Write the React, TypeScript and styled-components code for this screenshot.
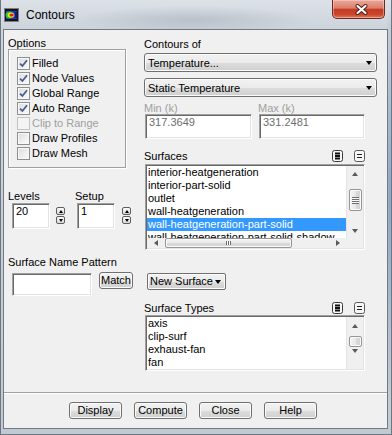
import React from 'react'
import styled, { createGlobalStyle, css } from 'styled-components'

const GlobalStyle = createGlobalStyle`
  html, body {
    margin: 0;
    padding: 0;
  }
  body {
    font-family: "Liberation Sans", Arial, sans-serif;
    font-size: 11px;
    color: #000;
    background: #c3cad2;
  }
  * {
    box-sizing: border-box;
  }
`

const options = [
  { label: 'Filled', checked: true },
  { label: 'Node Values', checked: true },
  { label: 'Global Range', checked: true },
  { label: 'Auto Range', checked: true },
  { label: 'Clip to Range', checked: false, disabled: true },
  { label: 'Draw Profiles', checked: false },
  { label: 'Draw Mesh', checked: false },
]

const surfaces = [
  'interior-heatgeneration',
  'interior-part-solid',
  'outlet',
  'wall-heatgeneration',
  'wall-heatgeneration-part-solid',
  'wall-heatgeneration-part-solid-shadow',
]

const surfaceTypes = ['axis', 'clip-surf', 'exhaust-fan', 'fan']

type Dir = 'up' | 'down' | 'left' | 'right'

const Triangle = styled.span<{ $dir: Dir; $w?: number; $h?: number; $color?: string }>`
  display: block;
  width: 0;
  height: 0;
  border-style: solid;
  ${({ $dir, $w = 7, $h = 4, $color = '#000' }) => {
    switch ($dir) {
      case 'up':
        return css`
          border-width: 0 ${$w / 2}px ${$h}px ${$w / 2}px;
          border-color: transparent transparent ${$color} transparent;
        `
      case 'down':
        return css`
          border-width: ${$h}px ${$w / 2}px 0 ${$w / 2}px;
          border-color: ${$color} transparent transparent transparent;
        `
      case 'left':
        return css`
          border-width: ${$w / 2}px ${$h}px ${$w / 2}px 0;
          border-color: transparent ${$color} transparent transparent;
        `
      default:
        return css`
          border-width: ${$w / 2}px 0 ${$w / 2}px ${$h}px;
          border-color: transparent transparent transparent ${$color};
        `
    }
  }}
`

const Window = styled.div`
  width: 392px;
  height: 435px;
  display: flex;
  flex-direction: column;
  border: 1px solid #6c7782;
  border-top: none;
  background:
    radial-gradient(ellipse 120px 14px at 190px 20px, rgba(140, 150, 165, 0.35), transparent),
    radial-gradient(ellipse 8px 200px at 389px 200px, rgba(90, 130, 180, 0.55), transparent),
    linear-gradient(180deg, #dde2e8 0px, #ccd3da 29px, #c2c9d1 100%);
`

const TitleBar = styled.div`
  height: 29px;
  display: flex;
  align-items: flex-start;
  padding-left: 2px;
  flex: none;
`

const Title = styled.div`
  margin: 8px 0 0 7px;
  line-height: 14px;
  font-size: 12px;
  color: #000;
`

const CloseButton = styled.div`
  margin-left: auto;
  margin-right: 6px;
  width: 53px;
  height: 19px;
  border: 1px solid #6e2a20;
  border-top: none;
  border-radius: 0 0 5px 5px;
  background: linear-gradient(180deg, #e9a99c 0%, #dc7e6c 45%, #c63b22 52%, #c9452c 80%, #dd7a5e 100%);
  box-shadow: inset 0 0 0 1px rgba(255, 220, 210, 0.45);
  display: flex;
  align-items: center;
  justify-content: center;
  padding-left: 6px;
`

const Client = styled.div`
  flex: 1;
  margin: 0 3px 5px 2px;
  background: #f0f0f0;
  border: 1px solid #6f7a86;
  display: flex;
  flex-direction: column;
`

const Body = styled.div`
  flex: 1;
  display: flex;
  align-items: flex-start;
  padding: 7px 0 0 4px;
`

const LeftColumn = styled.div`
  width: 128px;
  display: flex;
  flex-direction: column;
  align-items: flex-start;
`

const RightColumn = styled.div`
  width: 233px;
  margin-left: 8px;
  display: flex;
  flex-direction: column;
  align-items: flex-start;
`

const Caption = styled.div<{ $muted?: boolean; $top?: number; $lh?: number }>`
  line-height: ${p => p.$lh ?? 12}px;
  margin-top: ${p => p.$top ?? 0}px;
  color: ${p => (p.$muted ? '#a0a0a0' : '#000')};
  white-space: nowrap;
`

const GroupBox = styled.div`
  width: 118px;
  height: 119px;
  border: 1px solid #a0a0a0;
  box-shadow: inset 1px 1px 0 #fff, 1px 1px 0 #fff;
  padding: 6px 0 0 8px;
`

const CheckRow = styled.div`
  height: 15px;
  display: flex;
  align-items: center;
`

const CheckBox = styled.span<{ $disabled?: boolean }>`
  width: 13px;
  height: 13px;
  border: 1px solid ${p => (p.$disabled ? '#c4c4c4' : '#8e8f8f')};
  background: ${p =>
    p.$disabled
      ? '#f4f4f4'
      : 'linear-gradient(135deg, #dcdcdc 0%, #f0f0f0 60%, #fbfbfb 100%)'};
  box-shadow: inset 0 0 0 1px ${p => (p.$disabled ? '#f4f4f4' : '#f8f8f8')};
  display: flex;
  align-items: center;
  justify-content: center;
`

const CheckLabel = styled.span<{ $disabled?: boolean }>`
  margin-left: 2px;
  line-height: 13px;
  color: ${p => (p.$disabled ? '#a0a0a0' : '#000')};
`

const SpinRow = styled.div`
  margin-top: 22px;
  display: flex;
  gap: 10px;
`

const SpinField = styled.div`
  display: flex;
  flex-direction: column;
`

const EntryLine = styled.div<{ $indent: number; $gap: number }>`
  display: flex;
  align-items: flex-start;
  margin-left: ${p => p.$indent}px;
  gap: ${p => p.$gap}px;
`

const Entry = styled.div<{ $w: number; $h: number; $muted?: boolean; $left?: number }>`
  width: ${p => p.$w}px;
  height: ${p => p.$h}px;
  margin-left: ${p => p.$left ?? 0}px;
  flex: none;
  background: #fff;
  border: 1px solid;
  border-color: #a0a0a0 #fff #fff #a0a0a0;
  box-shadow: inset 1px 1px 0 #696969, inset -1px -1px 0 #e3e3e3;
  padding: 1px 3px;
  line-height: 12px;
  color: ${p => (p.$muted ? '#6d6d6d' : '#000')};
  white-space: nowrap;
`

const SpinButtons = styled.div`
  margin-top: 4px;
  display: flex;
  flex-direction: column;
  gap: 1px;
`

const SpinButton = styled.div`
  width: 9px;
  height: 8px;
  border: 1px solid #5e5e5e;
  border-radius: 2px;
  background: linear-gradient(#fafafa, #dadada);
  display: flex;
  align-items: center;
  justify-content: center;
`

const PatternRow = styled.div`
  margin-top: 4px;
  display: flex;
  align-items: flex-start;
  gap: 7px;
  margin-left: 4px;
`

const PushButton = styled.div<{ $w: number; $shift?: number }>`
  width: ${p => p.$w}px;
  height: 17px;
  margin-top: ${p => p.$shift ?? 0}px;
  border: 1px solid #707070;
  border-radius: 3px;
  background: linear-gradient(#f2f2f2 0%, #ebebeb 50%, #dddddd 51%, #cfcfcf 100%);
  box-shadow: inset 0 0 0 1px #fbfbfb;
  line-height: 15px;
  text-align: center;
  white-space: nowrap;
  flex: none;
`

const MenuButton = styled(PushButton)`
  display: flex;
  align-items: center;
  gap: 2px;
  padding-left: 2px;
  margin-left: 3px;
  margin-top: 23px;
  border-radius: 2px;
`

const Combo = styled.div<{ $top: number }>`
  width: 233px;
  height: 19px;
  margin-top: ${p => p.$top}px;
  border: 1px solid #707070;
  border-radius: 3px;
  background: linear-gradient(#f2f2f2 0%, #ebebeb 50%, #dddddd 51%, #cfcfcf 100%);
  box-shadow: inset 0 0 0 1px #fbfbfb;
  display: flex;
  align-items: center;
  justify-content: space-between;
  padding: 0 4px 0 3px;
`

const RangeRow = styled.div`
  margin-top: 6px;
  display: flex;
  gap: 6px;
`

const RangeField = styled.div`
  display: flex;
  flex-direction: column;
`

const ListHeader = styled.div<{ $top: number }>`
  width: 221px;
  height: 13px;
  margin-top: ${p => p.$top}px;
  display: flex;
  align-items: center;
  justify-content: space-between;
`

const HeaderTools = styled.div`
  display: flex;
  gap: 11px;
`

const ListFrame = styled.div<{ $h: number; $top: number; $hscroll?: boolean }>`
  width: 220px;
  height: ${p => p.$h}px;
  margin: ${p => p.$top}px 0 0 1px;
  border: 1px solid;
  border-color: #a0a0a0 #fff #fff #a0a0a0;
  box-shadow: inset 1px 1px 0 #696969, inset -1px -1px 0 #e3e3e3;
  padding: 1px;
  background: #fff;
  display: grid;
  grid-template-columns: 1fr 17px;
  grid-template-rows: ${p => (p.$hscroll ? '1fr 10px' : '1fr')};
`

const ListItems = styled.div`
  grid-column: 1;
  grid-row: 1;
  overflow: hidden;
`

const ListItem = styled.div<{ $selected?: boolean }>`
  height: 13px;
  line-height: 13px;
  padding-left: 1px;
  white-space: nowrap;
  background: ${p => (p.$selected ? '#3399ff' : 'transparent')};
  color: ${p => (p.$selected ? '#fff' : '#000')};
`

const VTrack = styled.div`
  grid-column: 2;
  grid-row: 1;
  background: #f0f0f0;
  border-left: 1px solid #e4e4e4;
  display: flex;
  flex-direction: column;
  align-items: center;
  overflow: hidden;
`

const Cell = styled.div<{ $h: number }>`
  height: ${p => p.$h}px;
  flex: none;
  width: 100%;
  display: flex;
  align-items: center;
  justify-content: center;
`

const VThumb = styled.div<{ $h: number }>`
  width: 13px;
  height: ${p => p.$h}px;
  flex: none;
  border: 1px solid #959595;
  border-radius: 2px;
  background: linear-gradient(90deg, #f4f4f4 0%, #e8e8e8 50%, #d9d9d9 51%, #d4d4d4 100%);
  box-shadow: inset 0 0 0 1px #fafafa;
  display: flex;
  align-items: center;
  justify-content: center;
`

const VGrip = styled.div`
  width: 7px;
  height: 7px;
  background: repeating-linear-gradient(180deg, #6f6f6f 0 1px, #fafafa 1px 2px);
`

const HTrack = styled.div`
  grid-column: 1;
  grid-row: 2;
  background: #f0f0f0;
  display: flex;
  align-items: center;
`

const HThumb = styled.div`
  width: 127px;
  height: 10px;
  margin-left: 1px;
  border: 1px solid #959595;
  border-radius: 2px;
  background: linear-gradient(#f4f4f4 0%, #e8e8e8 50%, #d9d9d9 51%, #d4d4d4 100%);
  box-shadow: inset 0 0 0 1px #fafafa;
  display: flex;
  align-items: center;
  justify-content: center;
`

const HGrip = styled.div`
  width: 5px;
  height: 4px;
  background: repeating-linear-gradient(90deg, #6f6f6f 0 1px, #fafafa 1px 2px);
`

const Filler = styled.div`
  flex: 1;
`

const Corner = styled.div`
  grid-column: 2;
  grid-row: 2;
  background: #f0f0f0;
`

const Separator = styled.div`
  border-top: 1px solid #a0a0a0;
  border-bottom: 1px solid #fff;
`

const ButtonRow = styled.div`
  display: flex;
  justify-content: center;
  gap: 12px;
  padding: 8px 5px 9px 0;
`

const AppIcon = () => (
  <svg width="15" height="14" viewBox="0 0 15 14" style={{ marginTop: 8, marginLeft: 1 }}>
    <rect x="0.5" y="0.5" width="14" height="13" fill="#151515" stroke="#7d7d7d" />
    <rect x="2" y="3" width="11" height="8" fill="#1838c8" />
    <ellipse cx="5.5" cy="7" rx="4" ry="3.6" fill="#19c84a" />
    <ellipse cx="7" cy="7" rx="3.4" ry="2.6" fill="#f0e020" />
    <ellipse cx="7.6" cy="7" rx="2.2" ry="1.6" fill="#e82010" />
    <rect x="11" y="4" width="2" height="6" fill="#0a1890" />
  </svg>
)

const CloseGlyph = () => (
  <svg width="13" height="11" viewBox="0 0 13 11">
    <path d="M2.5 2 L10.5 9 M10.5 2 L2.5 9" stroke="#4a1a14" strokeWidth="4" strokeLinecap="round" />
    <path d="M2.5 2 L10.5 9 M10.5 2 L2.5 9" stroke="#fff" strokeWidth="2.2" strokeLinecap="round" />
  </svg>
)

const CheckMark = () => (
  <svg width="9" height="9" viewBox="0 0 9 9">
    <path d="M1 4.6 L3.4 7 L8 1.2" fill="none" stroke="#4a5d8f" strokeWidth="1.8" />
  </svg>
)

const SelectAllIcon = () => (
  <svg width="11" height="12" viewBox="0 0 11 12">
    <rect x="0.5" y="0.5" width="10" height="11" rx="2" fill="#f6f6f6" stroke="#3a3a3a" />
    <rect x="3" y="2.5" width="5" height="2" fill="#111" />
    <rect x="3" y="5" width="5" height="2" fill="#111" />
    <rect x="3" y="7.5" width="5" height="2" fill="#111" />
  </svg>
)

const DeselectAllIcon = () => (
  <svg width="11" height="12" viewBox="0 0 11 12">
    <rect x="0.5" y="0.5" width="10" height="11" rx="2" fill="#f6f6f6" stroke="#5a5a5a" />
    <path d="M3 4.5 H8 M3 7.5 H8" stroke="#222" strokeWidth="1" />
  </svg>
)

type ScrollLayout = { up: number; gapA: number; thumb: number; gapB: number; down: number; grip?: boolean }

const VScroll = ({ up, gapA, thumb, gapB, down, grip }: ScrollLayout) => (
  <VTrack>
    <Cell $h={up}>
      <Triangle $dir="up" $w={7} $h={4} $color="#5a5a5a" />
    </Cell>
    <Cell $h={gapA} />
    <VThumb $h={thumb}>{grip && <VGrip />}</VThumb>
    <Cell $h={gapB} />
    <Cell $h={down}>
      <Triangle $dir="down" $w={7} $h={4} $color="#5a5a5a" />
    </Cell>
  </VTrack>
)

const Spinner = () => (
  <SpinButtons>
    <SpinButton>
      <Triangle $dir="up" $w={5} $h={3} />
    </SpinButton>
    <SpinButton>
      <Triangle $dir="down" $w={5} $h={3} />
    </SpinButton>
  </SpinButtons>
)

export default function App() {
  return (
    <>
      <GlobalStyle />
      <Window>
        <TitleBar>
          <AppIcon />
          <Title>Contours</Title>
          <CloseButton>
            <CloseGlyph />
          </CloseButton>
        </TitleBar>
        <Client>
          <Body>
            <LeftColumn>
              <Caption>Options</Caption>
              <GroupBox>
                {options.map(o => (
                  <CheckRow key={o.label}>
                    <CheckBox $disabled={o.disabled}>{o.checked && <CheckMark />}</CheckBox>
                    <CheckLabel $disabled={o.disabled}>{o.label}</CheckLabel>
                  </CheckRow>
                ))}
              </GroupBox>

              <SpinRow>
                <SpinField>
                  <Caption $lh={13}>Levels</Caption>
                  <EntryLine $indent={4} $gap={6}>
                    <Entry $w={38} $h={26}>20</Entry>
                    <Spinner />
                  </EntryLine>
                </SpinField>
                <SpinField>
                  <Caption $lh={13}>Setup</Caption>
                  <EntryLine $indent={2} $gap={7}>
                    <Entry $w={38} $h={26}>1</Entry>
                    <Spinner />
                  </EntryLine>
                </SpinField>
              </SpinRow>

              <Caption $top={27} $lh={13}>Surface Name Pattern</Caption>
              <PatternRow>
                <Entry $w={80} $h={23} />
                <PushButton $w={34} $shift={-1}>Match</PushButton>
              </PatternRow>
            </LeftColumn>

            <RightColumn>
              <Caption $top={1}>Contours of</Caption>
              <Combo $top={3}>
                <span>Temperature...</span>
                <Triangle $dir="down" />
              </Combo>
              <Combo $top={6}>
                <span>Static Temperature</span>
                <Triangle $dir="down" />
              </Combo>

              <RangeRow>
                <RangeField>
                  <Caption $muted $lh={11}>Min (k)</Caption>
                  <Entry $w={107} $h={25} $left={1} $muted>317.3649</Entry>
                </RangeField>
                <RangeField>
                  <Caption $muted $lh={11}>Max (k)</Caption>
                  <Entry $w={106} $h={25} $left={1} $muted>331.2481</Entry>
                </RangeField>
              </RangeRow>

              <ListHeader $top={10}>
                <span>Surfaces</span>
                <HeaderTools>
                  <SelectAllIcon />
                  <DeselectAllIcon />
                </HeaderTools>
              </ListHeader>
              <ListFrame $h={86} $top={2} $hscroll>
                <ListItems>
                  {surfaces.map((s, i) => (
                    <ListItem key={s} $selected={i === 4}>{s}</ListItem>
                  ))}
                </ListItems>
                <VScroll up={15} gapA={8} thumb={22} gapB={13} down={14} grip />
                <HTrack>
                  <Cell $h={10} style={{ width: 17 }}>
                    <Triangle $dir="left" $w={7} $h={4} $color="#5a5a5a" />
                  </Cell>
                  <HThumb>
                    <HGrip />
                  </HThumb>
                  <Filler />
                  <Cell $h={10} style={{ width: 17 }}>
                    <Triangle $dir="right" $w={7} $h={4} $color="#5a5a5a" />
                  </Cell>
                </HTrack>
                <Corner />
              </ListFrame>

              <MenuButton $w={79}>
                <span>New Surface</span>
                <Triangle $dir="down" />
              </MenuButton>

              <ListHeader $top={11}>
                <span>Surface Types</span>
                <HeaderTools>
                  <SelectAllIcon />
                  <DeselectAllIcon />
                </HeaderTools>
              </ListHeader>
              <ListFrame $h={56} $top={1}>
                <ListItems>
                  {surfaceTypes.map(s => (
                    <ListItem key={s}>{s}</ListItem>
                  ))}
                </ListItems>
                <VScroll up={18} gapA={1} thumb={11} gapB={0} down={8} />
              </ListFrame>
            </RightColumn>
          </Body>

          <Separator />
          <ButtonRow>
            <PushButton $w={53}>Display</PushButton>
            <PushButton $w={53}>Compute</PushButton>
            <PushButton $w={53}>Close</PushButton>
            <PushButton $w={53}>Help</PushButton>
          </ButtonRow>
        </Client>
      </Window>
    </>
  )
}
